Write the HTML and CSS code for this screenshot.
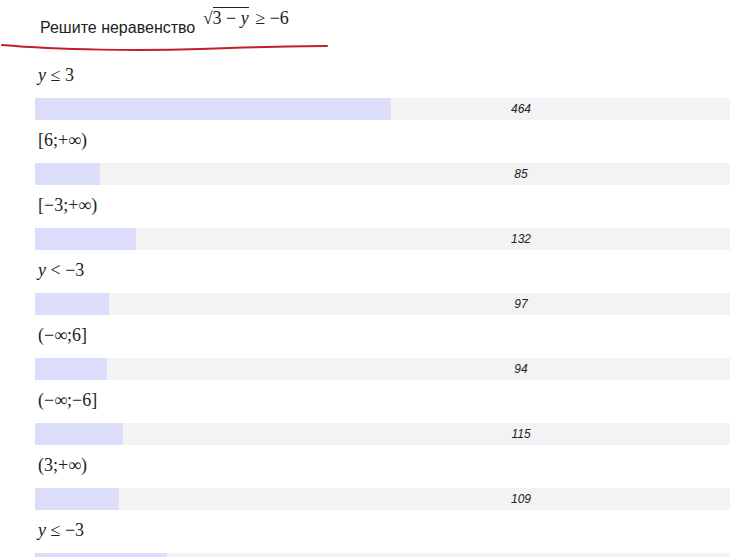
FILE: index.html
```html
<!DOCTYPE html>
<html lang="ru">
<head>
<meta charset="utf-8">
<link rel="stylesheet" href="styles.css">
</head>
<body>
<div class="page">
  <header class="head">
    <div class="title">
      <span class="q">Решите неравенство</span>
      <span class="formula"><span class="rad">√</span><span class="under">3 − <i>y</i></span> ≥ −6</span>
    </div>
    <svg class="mark" width="340" height="14" viewBox="0 0 340 14">
      <path d="M2 3 C 60 8, 140 9, 200 7 S 300 4, 327 4" fill="none" stroke="#c41e2a" stroke-width="2" stroke-linecap="round"/>
    </svg>
  </header>
  <main class="list">
    <div class="row"><div class="label"><i>y</i> ≤ 3</div><div class="track"><div class="fill" style="width:356px"></div><span class="num">464</span></div></div>
    <div class="row"><div class="label">[6;+∞)</div><div class="track"><div class="fill" style="width:65px"></div><span class="num">85</span></div></div>
    <div class="row"><div class="label">[−3;+∞)</div><div class="track"><div class="fill" style="width:101px"></div><span class="num">132</span></div></div>
    <div class="row"><div class="label"><i>y</i> &lt; −3</div><div class="track"><div class="fill" style="width:74px"></div><span class="num">97</span></div></div>
    <div class="row"><div class="label">(−∞;6]</div><div class="track"><div class="fill" style="width:72px"></div><span class="num">94</span></div></div>
    <div class="row"><div class="label">(−∞;−6]</div><div class="track"><div class="fill" style="width:88px"></div><span class="num">115</span></div></div>
    <div class="row"><div class="label">(3;+∞)</div><div class="track"><div class="fill" style="width:84px"></div><span class="num">109</span></div></div>
    <div class="row"><div class="label"><i>y</i> ≤ −3</div><div class="track"><div class="fill" style="width:132px"></div></div></div>
  </main>
</div>
</body>
</html>
```
FILE: styles.css
```css
html, body {
  margin: 0;
  padding: 0;
  background: #fff;
  overflow: hidden;
}
.page {
  width: 730px;
  height: 557px;
  overflow: hidden;
}
.head {
  height: 64px;
  display: flex;
  flex-direction: column;
}
.title {
  padding: 8px 0 0 40px;
  height: 32px;
  display: flex;
  align-items: flex-start;
  white-space: nowrap;
}
.q {
  font-family: "Liberation Sans", Arial, sans-serif;
  font-size: 16px;
  color: #222;
  line-height: 18px;
  margin-top: 11px;
}
.formula {
  font-family: "Liberation Serif", "Times New Roman", serif;
  font-size: 18px;
  color: #222;
  line-height: 20px;
  margin-left: 8px;
}
.rad {
  font-size: 17px;
}
.under {
  border-top: 1px solid #222;
  margin-right: 2px;
}
.mark {
  display: block;
  margin-top: 2px;
}
.list {
  display: flex;
  flex-direction: column;
  padding-left: 35px;
}
.row {
  display: flex;
  flex-direction: column;
  height: 65px;
}
.label {
  font-family: "Liberation Serif", "Times New Roman", serif;
  font-size: 18px;
  color: #222;
  line-height: 22px;
  height: 22px;
  padding-left: 3px;
  margin-bottom: 12px;
}
.track {
  position: relative;
  width: 972px;
  height: 22px;
  background: #f3f3f6;
  display: flex;
  align-items: center;
  justify-content: center;
}
.fill {
  position: absolute;
  left: 0;
  top: 0;
  height: 22px;
  background: #dcdcfb;
}
.num {
  position: relative;
  font-family: "Liberation Sans", Arial, sans-serif;
  font-style: italic;
  font-size: 12px;
  color: #222;
}
```
